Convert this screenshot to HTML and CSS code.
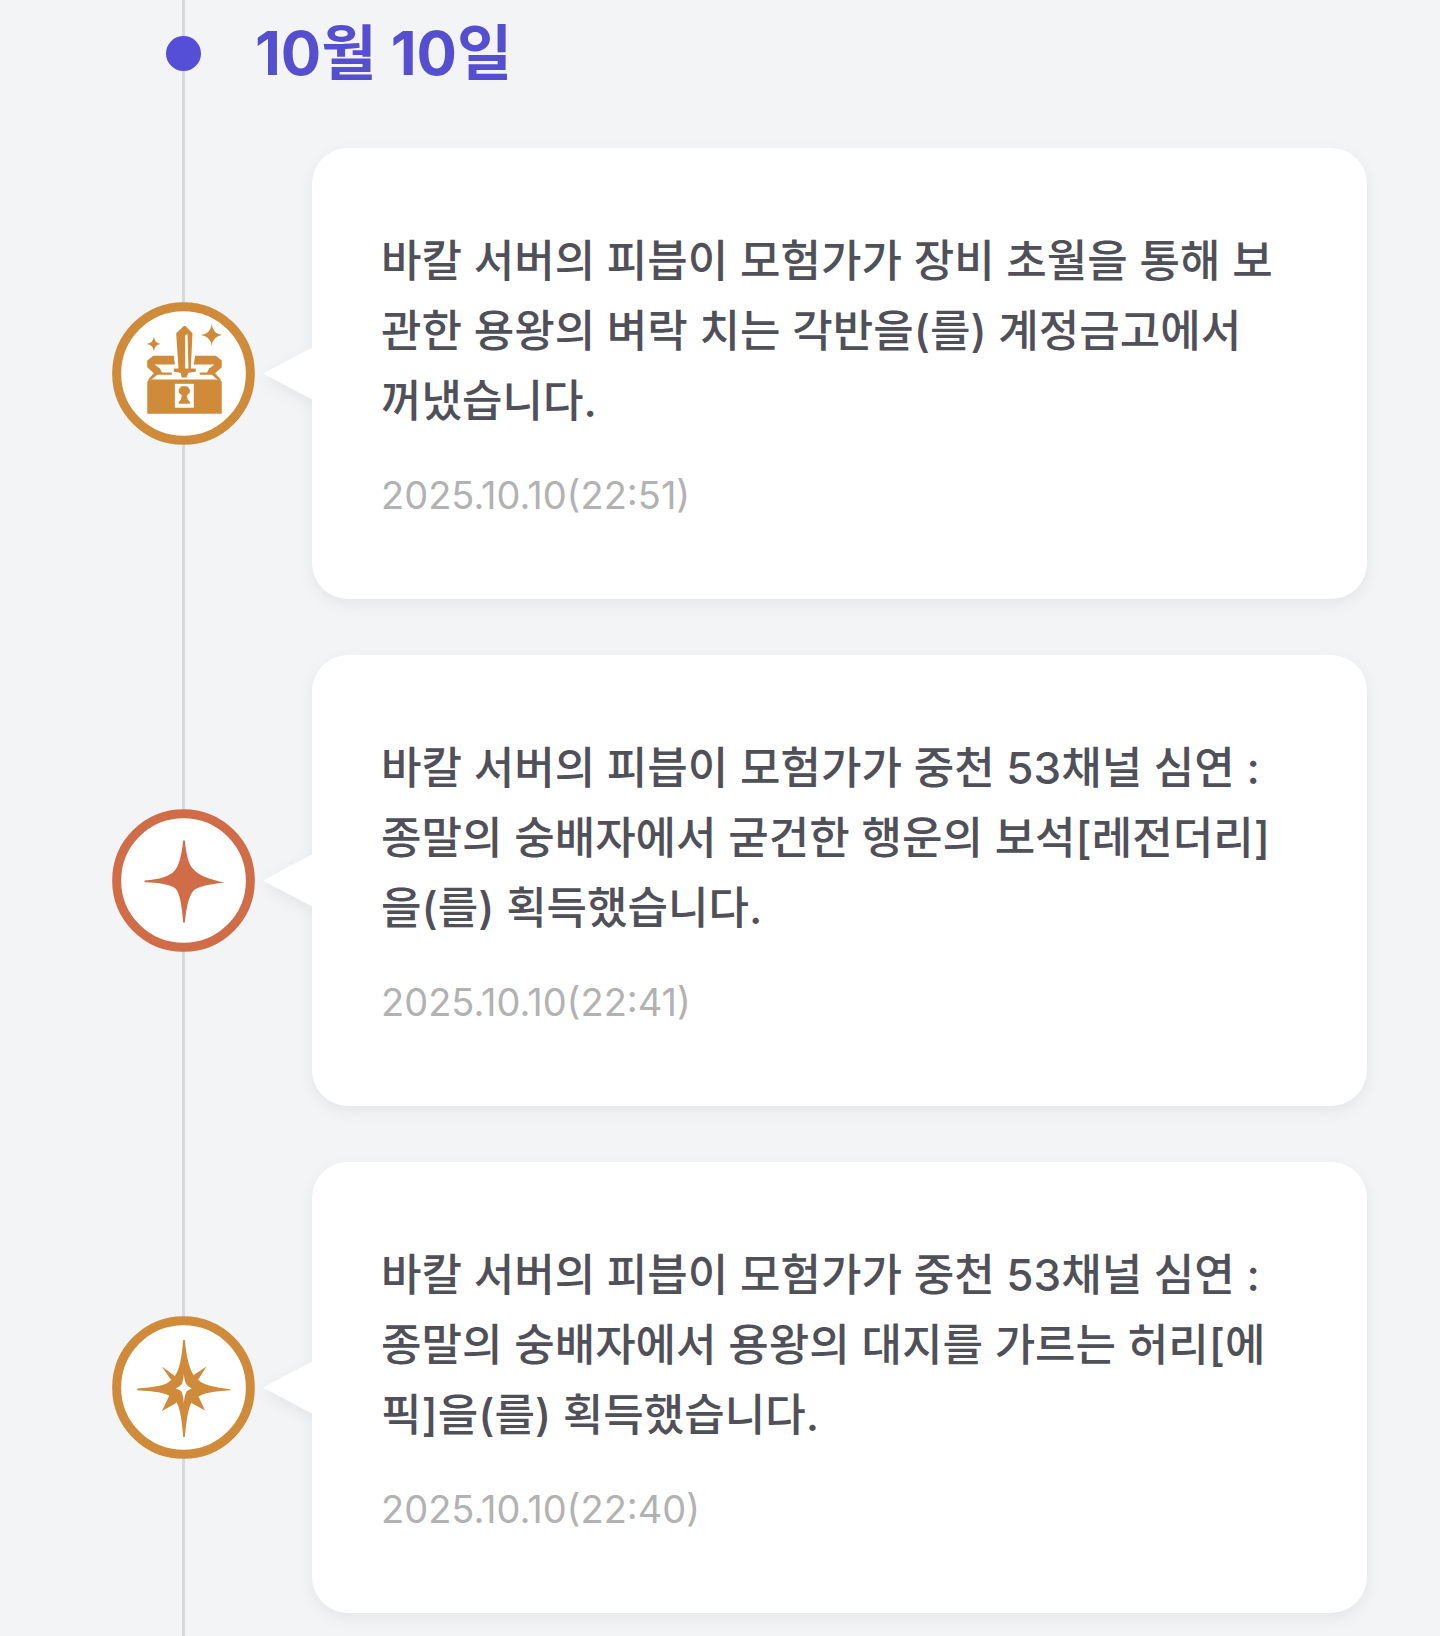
FILE: index.html
```
<!DOCTYPE html>
<html lang="ko">
<head>
    <meta charset="UTF-8">
    <meta name="viewport" content="width=device-width, initial-scale=1.0">
    <title>타임라인</title>
    <link rel="stylesheet" href="styles.css">
</head>
<body>
    <main class="timeline">
        <header class="timeline-date">
            <span class="dot"></span>
            <h1>10월 10일</h1>
        </header>
        <ol class="timeline-list">
            <li class="timeline-item">
                <!-- treasure chest -->
                <svg class="icon icon-epic" viewBox="36 36 430 430" aria-hidden="true">
                    <circle class="ring" cx="251" cy="251" r="201"/>
                    <path d="M336 102Q339 131 367 135Q339 139 336 168Q333 139 303 135Q333 131 336 102Z"/>
                    <path d="M162 140Q164 160 182 162Q164 164 162 184Q160 164 140 162Q160 160 162 140Z"/>
                    <path d="M160 198H222L225 224H164L180 236L186 248H216V255H172L154 270H144L162 250L142 232V212Z"/>
                    <path d="M286 198H348L366 212V232L346 250L364 270H354L336 255H300V248H322L328 236L344 224H282Z"/>
                    <path d="M252 108H257L278 130L273 236H288V246L266 249L260 263H246L242 249L222 246V236H236L229 130Z"/>
                    <path class="cut" d="M256 136L263 132L266 236H256Z"/>
                    <path d="M148 269H360L366 276V372H142V276Z"/>
                    <path class="cut" d="M225 282H282V354H225Z"/>
                    <path d="M245 289H262L270 298V308L261 317L264 330L270 336V342H237V336L243 330L246 317L237 308V298Z"/>
                </svg>
                <article class="card">
                    <p class="card-text">바칼 서버의 피븝이 모험가가 장비 초월을 통해 보관한 용왕의 벼락 치는 각반을(를) 계정금고에서 꺼냈습니다.</p>
                    <time class="card-time" datetime="2025-10-10T22:51">2025.10.10(22:51)</time>
                </article>
            </li>
            <li class="timeline-item">
                <!-- four-pointed star -->
                <svg class="icon icon-legendary" viewBox="36 57 430 430" aria-hidden="true">
                    <circle class="ring" cx="251" cy="272" r="201"/>
                    <path d="M250 152H255Q262 222 279 236Q300 264 374 278Q294 287 281 303Q262 324 255 398H250Q244 322 231 301Q218 280 134 277V272Q202 268 225 242Q243 220 250 152Z"/>
                </svg>
                <article class="card">
                    <p class="card-text">바칼 서버의 피븝이 모험가가 중천 53채널 심연 : 종말의 숭배자에서 굳건한 행운의 보석[레전더리]을(를) 획득했습니다.</p>
                    <time class="card-time" datetime="2025-10-10T22:41">2025.10.10(22:41)</time>
                </article>
            </li>
            <li class="timeline-item">
                <!-- eight-pointed star -->
                <svg class="icon icon-epic" viewBox="36 50 430 430" aria-hidden="true">
                    <circle class="ring" cx="251" cy="265" r="201"/>
                    <path d="M250 122H255Q262 200 282 228Q286 234 300 246Q320 262 392 270V273Q318 277 296 292Q282 302 274 312Q262 334 255 414H250Q244 330 230 310Q224 300 208 290Q190 277 112 273V268Q188 264 208 248Q220 238 228 226Q244 200 250 122Z"/>
                    <path d="M186 202L222 228L240 256L212 240ZM320 202L284 226L266 254L296 240ZM186 336L228 312L240 282L208 290ZM316 334L276 312L266 282L296 292Z"/>
                    <path class="cut" d="M252 224Q254 248 260 256Q264 262 276 268Q264 272 260 278Q254 288 252 312Q250 288 245 278Q240 272 228 268Q240 262 245 256Q250 248 252 224Z"/>
                </svg>
                <article class="card">
                    <p class="card-text">바칼 서버의 피븝이 모험가가 중천 53채널 심연 : 종말의 숭배자에서 용왕의 대지를 가르는 허리[에픽]을(를) 획득했습니다.</p>
                    <time class="card-time" datetime="2025-10-10T22:40">2025.10.10(22:40)</time>
                </article>
            </li>
        </ol>
    </main>
</body>
</html>
```
FILE: styles.css
```
* {
    box-sizing: border-box;
}

body {
    margin: 0;
    background: #f3f4f6;
    color: #505059;
    font-family: Inter, "Noto Sans CJK KR", sans-serif;
}

/* the vertical line runs behind the dot and the icons */
.timeline {
    padding: 0 73px 0 112px;
    background: linear-gradient(#d8d9db, #d8d9db) 182px 0 / 3px 100% no-repeat;
}

.timeline-date {
    display: grid;
    grid-template-columns: 143px 1fr;
    align-items: center;
    padding: 18px 0 32px;
}

.dot {
    width: 35px;
    height: 35px;
    border-radius: 50%;
    background: #554fd8;
    justify-self: center;
}

h1 {
    margin: 0;
    color: #554fcf;
    font-size: 60px;
    font-weight: 700;
    line-height: 70px;
}

.timeline-list {
    display: flex;
    flex-direction: column;
    gap: 56px;
    margin: 0;
    padding: 28px 0 23px;
    list-style: none;
}

.timeline-item {
    display: grid;
    grid-template-columns: 143px 1fr;
    gap: 57px;
    align-items: center;
}

.icon {
    display: block;
    width: 143px;
    height: 143px;
    fill: currentColor;
}

.icon-epic {
    color: #cf8a3a;
}

.icon-legendary {
    color: #d16c48;
}

.ring {
    fill: #fff;
    stroke: currentColor;
    stroke-width: 27;
}

.cut {
    fill: #fff;
}

.card {
    position: relative;
    padding: 78px 92px 74px 69px;
    border-radius: 36px;
    background: #fff;
    filter: drop-shadow(0 5px 7px rgba(0, 0, 0, 0.06));
}

/* speech bubble tail */
.card::before {
    content: "";
    position: absolute;
    top: 50%;
    right: 100%;
    width: 49px;
    height: 52px;
    margin-top: -26px;
    background: #fff;
    clip-path: polygon(0 50%, 100% 0, 100% 100%);
}

.card-text {
    margin: 0 0 29px;
    font-size: 44px;
    font-weight: 500;
    line-height: 70px;
}

.card-time {
    display: block;
    color: #b2b2b2;
    font-size: 38px;
    line-height: 60px;
}
```
